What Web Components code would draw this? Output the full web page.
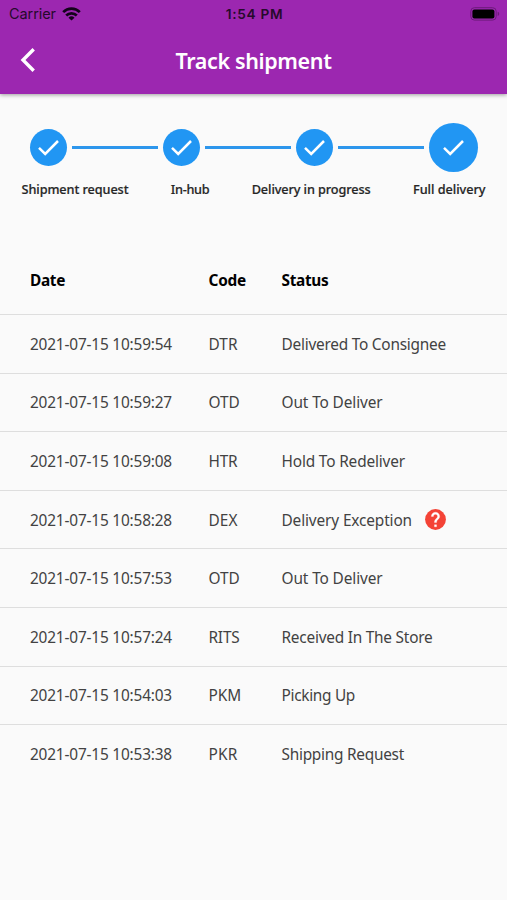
<!DOCTYPE html>
<html lang="en">
<head>
<meta charset="utf-8">
<title>Track shipment</title>
<style>
    body {
        margin: 0;
        background: #fafafa;
        color: #424242;
        font-family: "Noto Sans", "Open Sans", sans-serif;
    }
</style>
</head>
<body>
<track-page></track-page>

<script>
const STEPS = [
    { label: 'Shipment request', width: 107 },
    { label: 'In-hub', width: 38.5 },
    { label: 'Delivery in progress', width: 119 },
    { label: 'Full delivery', width: 72.5 },
];

const EVENTS = [
    ['2021-07-15 10:59:54', 'DTR', 'Delivered To Consignee', 29, 164.5],
    ['2021-07-15 10:59:27', 'OTD', 'Out To Deliver', 31, 101],
    ['2021-07-15 10:59:08', 'HTR', 'Hold To Redeliver', 29, 123.5],
    ['2021-07-15 10:58:28', 'DEX', 'Delivery Exception', 29, 130.5, true],
    ['2021-07-15 10:57:53', 'OTD', 'Out To Deliver', 31, 101],
    ['2021-07-15 10:57:24', 'RITS', 'Received In The Store', 31, 151],
    ['2021-07-15 10:54:03', 'PKM', 'Picking Up', 32.5, 73.5],
    ['2021-07-15 10:53:38', 'PKR', 'Shipping Request', 29, 122.5],
];

// text tracked so that it fills the given width
class FitText extends HTMLElement {
    constructor() {
        super();
        this.attachShadow({ mode: 'open' });
    }

    connectedCallback() {
        this.shadowRoot.innerHTML = `
      <style>
        :host { display: inline-block; white-space: nowrap; }
        span { display: inline-block; }
      </style>
      <span><slot></slot></span>
    `;
        const span = this.shadowRoot.querySelector('span');
        const width = Number(this.getAttribute('width'));
        const gap = (width - span.getBoundingClientRect().width) / this.textContent.length;
        span.style.letterSpacing = `${gap}px`;
        this.style.width = `${width}px`;
    }
}

class StatusBar extends HTMLElement {
    constructor() {
        super();
        this.attachShadow({ mode: 'open' });
        this.shadowRoot.innerHTML = `
      <style>
        :host {
          display: grid;
          grid-template-columns: 1fr auto 1fr;
          align-items: center;
          height: 28px;
          padding: 0 7px 0 9px;
          color: #260a2c;
          font: 14.5px/28px Inter, "Liberation Sans", sans-serif;
        }
        .left { display: flex; align-items: center; gap: 6px; }
        .time { font-weight: 600; font-size: 13.7px; }
        .battery { justify-self: end; }
        svg { display: block; }
      </style>
      <div class="left">
        <fit-text width="47">Carrier</fit-text>
        <svg width="19" height="14" viewBox="0 0 19 14" fill="none" stroke="#13031a" stroke-width="2.7">
          <path d="M1.2 5.1a11.8 11.8 0 0 1 16.6 0M4.2 8.5a7.5 7.5 0 0 1 10.6 0"/>
          <path d="M9.5 13.6 6.5 10.7a4.3 4.3 0 0 1 6 0z" fill="#13031a" stroke="none"/>
        </svg>
      </div>
      <fit-text class="time" width="57.5">1:54 PM</fit-text>
      <svg class="battery" width="30" height="14" viewBox="0 0 30 14">
        <rect x=".8" y=".7" width="25.4" height="12.4" rx="3.6" fill="none" stroke="#6d1b7b"/>
        <rect x="2.4" y="2.4" width="22" height="9" rx="2" fill="#000"/>
        <path d="M27.7 4.8c2 .6 2 3.6 0 4.2z" fill="#6d1b7b"/>
      </svg>
    `;
    }
}

class AppBar extends HTMLElement {
    constructor() {
        super();
        this.attachShadow({ mode: 'open' });
    }

    connectedCallback() {
        this.shadowRoot.innerHTML = `
      <style>
        :host {
          display: block;
          height: 94px;
          background: #9c27b0;
          box-shadow: 0 1px 4px rgba(0, 0, 0, 0.38);
        }
        .bar {
          display: grid;
          grid-template-columns: 1fr auto 1fr;
          align-items: center;
          height: 64px;
          padding: 0 20px;
          color: white;
          font-size: 21.5px;
          font-weight: 600;
        }
        svg { display: block; }
      </style>
      <status-bar></status-bar>
      <div class="bar">
        <svg width="16" height="26" viewBox="0 0 16 26" fill="none" stroke="#fff" stroke-width="3.4">
          <path d="M13.7 2.2 3 13l10.7 10.8"/>
        </svg>
        <fit-text width="156">${this.getAttribute('heading')}</fit-text>
      </div>
    `;
    }
}

class StepCircle extends HTMLElement {
    constructor() {
        super();
        this.attachShadow({ mode: 'open' });
        this.shadowRoot.innerHTML = `
      <style>
        :host {
          display: flex;
          align-items: center;
          justify-content: center;
          width: 37px;
          height: 37px;
          border-radius: 50%;
          background: #2196f3;
        }
        :host([large]) { width: 49px; height: 49px; }
      </style>
      <svg width="23" height="19" viewBox="0 0 23 19" fill="none" stroke="#fff" stroke-width="2.5">
        <path d="M2 9.900 8.200 16 21 3"/>
      </svg>
    `;
    }
}

class ShipmentSteps extends HTMLElement {
    constructor() {
        super();
        this.attachShadow({ mode: 'open' });
    }

    connectedCallback() {
        const last = STEPS.length - 1;
        this.shadowRoot.innerHTML = `
      <style>
        :host { display: block; padding-top: 29px; height: 123px; }
        .track {
          display: flex;
          align-items: center;
          gap: 5px;
          height: 49px;
          padding: 0 29px 0 30px;
        }
        .line { flex: 1; height: 2.5px; background: #2d96ec; }
        .labels {
          display: flex;
          justify-content: space-between;
          padding: 8px 21.5px 0 21.5px;
          color: #262626;
          font-size: 12.7px;
          font-weight: 500;
          line-height: 18px;
          -webkit-text-stroke: 0.2px #262626;
        }
      </style>
      <div class="track">
        ${STEPS.map((s, i) => i < last
            ? '<step-circle></step-circle><div class="line"></div>'
            : '<step-circle large></step-circle>').join('')}
      </div>
      <div class="labels">
        ${STEPS.map((s) => `<fit-text width="${s.width}">${s.label}</fit-text>`).join('')}
      </div>
    `;
    }
}

class EventRow extends HTMLElement {
    constructor() {
        super();
        this.attachShadow({ mode: 'open' });
        this.shadowRoot.innerHTML = `
      <style>
        :host {
          display: grid;
          grid-template-columns: 178.5px 73px 1fr;
          align-items: center;
          box-sizing: border-box;
          height: 58.6px;
          padding: 1px 0 0 30px;
          border-top: 1.5px solid #dedede;
          font-size: 15.4px;
        }
        :host([head]) {
          height: 68px;
          padding-top: 0;
          border-top: none;
          color: #000;
          font-weight: 700;
        }
        .status { display: flex; align-items: center; gap: 11px; }
      </style>
      <slot name="date"></slot>
      <slot name="code"></slot>
      <div class="status"><slot name="status"></slot><slot></slot></div>
    `;
    }
}

class HelpIcon extends HTMLElement {
    constructor() {
        super();
        this.attachShadow({ mode: 'open' });
        this.shadowRoot.innerHTML = `
      <style>
        :host { display: block; margin: -2px 0 0 -0.5px; }
        svg { display: block; }
      </style>
      <svg width="25" height="25" viewBox="0 0 24 24" fill="#fff">
        <circle cx="12" cy="12" r="10" fill="#f44336"/>
        <path d="M11 17h2v2h-2zM15.070 11.250l-.9.920C13.450 12.900 13 13.500 13 15h-2v-.5c0-1.100.45-2.100 1.170-2.830l1.240-1.260c.37-.36.59-.86.59-1.410 0-1.100-.9-2-2-2s-2 .9-2 2H8c0-2.210 1.790-4 4-4s4 1.790 4 4c0 .88-.36 1.680-.93 2.250z" stroke="#fff" stroke-width=".3"/>
      </svg>
    `;
    }
}

class EventTable extends HTMLElement {
    constructor() {
        super();
        this.attachShadow({ mode: 'open' });
    }

    connectedCallback() {
        this.shadowRoot.innerHTML = `
      <style>
        :host { display: block; }
      </style>
      <event-row head>
        <fit-text slot="date" width="35">Date</fit-text>
        <fit-text slot="code" width="37.500">Code</fit-text>
        <fit-text slot="status" width="47">Status</fit-text>
      </event-row>
      ${EVENTS.map(([date, code, status, codeWidth, statusWidth, help]) => `
        <event-row>
          <fit-text slot="date" width="142">${date}</fit-text>
          <fit-text slot="code" width="${codeWidth}">${code}</fit-text>
          <fit-text slot="status" width="${statusWidth}">${status}</fit-text>
          ${help ? '<help-icon></help-icon>' : ''}
        </event-row>`).join('')}
    `;
    }
}

class TrackPage extends HTMLElement {
    constructor() {
        super();
        this.attachShadow({ mode: 'open' });
        this.shadowRoot.innerHTML = `
      <style>
        :host { display: block; height: 900px; overflow: hidden; }
      </style>
      <app-bar heading="Track shipment"></app-bar>
      <shipment-steps></shipment-steps>
      <event-table></event-table>
    `;
    }
}

customElements.define('step-circle', StepCircle);
customElements.define('help-icon', HelpIcon);
customElements.define('event-row', EventRow);
customElements.define('event-table', EventTable);
customElements.define('shipment-steps', ShipmentSteps);
customElements.define('status-bar', StatusBar);
customElements.define('app-bar', AppBar);
customElements.define('track-page', TrackPage);
// last, so the text is measured inside its finished parents
customElements.define('fit-text', FitText);
</script>
</body>
</html>
